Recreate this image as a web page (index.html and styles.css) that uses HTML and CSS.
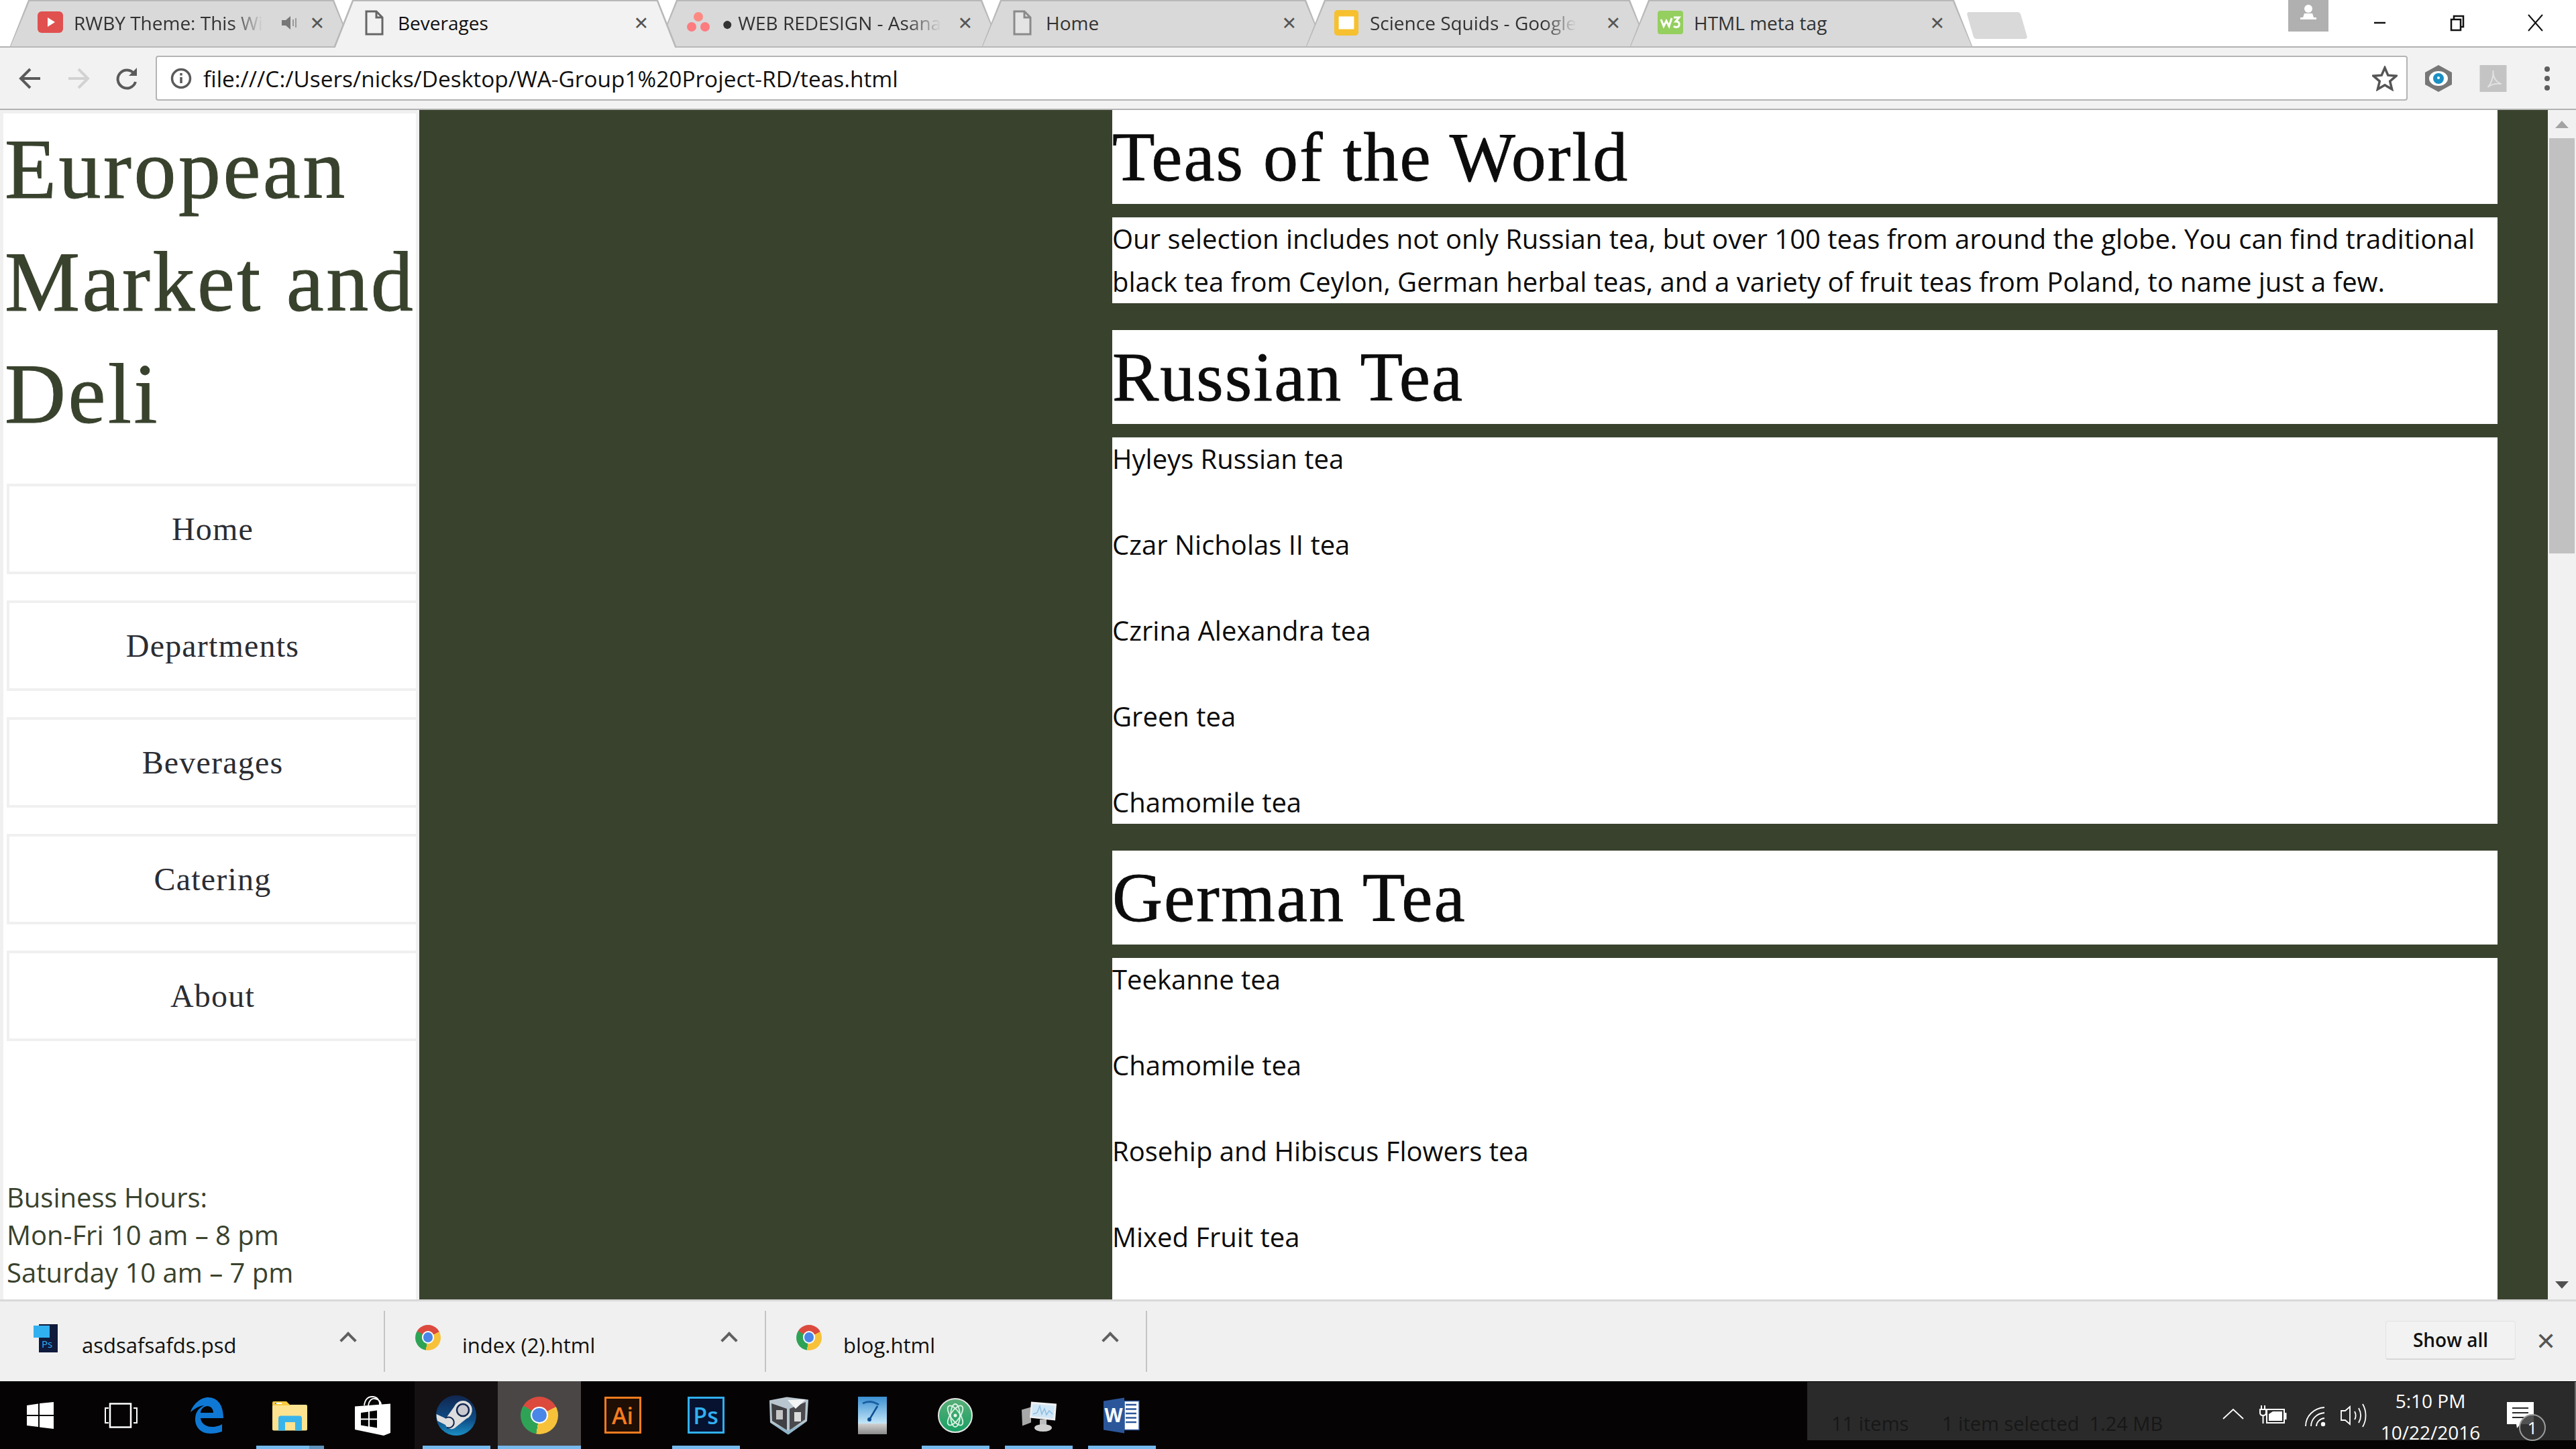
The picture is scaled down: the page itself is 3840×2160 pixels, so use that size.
FILE: index.html
```html
<!DOCTYPE html>
<html lang="en">
<head>
  <meta charset="UTF-8">
  <title>Beverages</title>
  <link rel="stylesheet" href="styles.css">
</head>
<body>
  <!-- Browser tabs -->
  <div class="tabstrip">
    <div class="tabs">
      <div class="tab">
        <svg class="fav" viewBox="0 0 38 38"><rect x="0" y="2" width="38" height="32" rx="6" fill="#e0504f"/><path d="M15 11l11 7-11 7z" fill="#fff"/></svg>
        <span class="tab-title tab-fade">RWBY Theme: This Wi</span>
        <svg class="tab-sound" viewBox="0 0 26 26"><path d="M1 9h6l7-6v20l-7-6H1z" fill="#777"/><path d="M18 8v10M22 6v14" stroke="#999" stroke-width="2"/></svg>
        <span class="tab-x">✕</span>
      </div>
      <div class="tab tab-active">
        <svg class="fav" viewBox="0 0 38 38"><path d="M7 2h15l9 9v25H7z" fill="#f2f2f2" stroke="#666" stroke-width="3"/><path d="M22 2v9h9" fill="none" stroke="#666" stroke-width="3"/></svg>
        <span class="tab-title">Beverages</span>
        <span class="tab-x">✕</span>
      </div>
      <div class="tab">
        <svg class="fav" viewBox="0 0 38 38"><circle cx="19" cy="10" r="7" fill="#fc8a83"/><circle cx="9" cy="25" r="7" fill="#fc7c80"/><circle cx="29" cy="25" r="7" fill="#fc7c80"/></svg>
        <span class="tab-title tab-fade">● WEB REDESIGN - Asana</span>
        <span class="tab-x">✕</span>
      </div>
      <div class="tab">
        <svg class="fav" viewBox="0 0 38 38"><path d="M7 2h15l9 9v25H7z" fill="#e4e4e4" stroke="#8a8a8a" stroke-width="3"/><path d="M22 2v9h9" fill="none" stroke="#8a8a8a" stroke-width="3"/></svg>
        <span class="tab-title">Home</span>
        <span class="tab-x">✕</span>
      </div>
      <div class="tab">
        <svg class="fav" viewBox="0 0 38 40"><rect y="0" width="38" height="40" rx="5" fill="#f6c02f"/><rect x="7" y="10" width="24" height="20" fill="#fff"/></svg>
        <span class="tab-title tab-fade">Science Squids - Google</span>
        <span class="tab-x">✕</span>
      </div>
      <div class="tab">
        <svg class="fav" viewBox="0 0 38 38"><rect y="1" width="38" height="35" rx="4" fill="#95cf5f"/><path d="M5 14l4 10 4-8 4 8 4-12M24 11h8l-5 6c5 0 6 3 5 6s-6 3-8 1" fill="none" stroke="#fff" stroke-width="3"/></svg>
        <span class="tab-title">HTML meta tag</span>
        <span class="tab-x">✕</span>
      </div>
    </div>
    <div class="new-tab"></div>
    <div class="window-btns">
      <div class="avatar">
        <svg viewBox="0 0 60 47"><circle cx="30" cy="13" r="6" fill="#fff"/><path d="M24 20h12l2 6h4v3H18v-3h4z" fill="#fff"/></svg>
      </div>
      <svg class="win-btn" viewBox="0 0 30 30"><path d="M7 15h17" stroke="#111" stroke-width="2.5"/></svg>
      <svg class="win-btn" viewBox="0 0 30 30"><path d="M6 10h14v16H6zM10 10V5h14v16h-4" fill="none" stroke="#111" stroke-width="2.5"/></svg>
      <svg class="win-btn" viewBox="0 0 30 30"><path d="M5 3l21 24M26 3L5 27" stroke="#111" stroke-width="2"/></svg>
    </div>
  </div>

  <!-- Back, forward, address bar -->
  <div class="toolbar">
    <svg class="tool-ico" viewBox="0 0 34 34"><path d="M32 17H4M17 3L3 17l14 14" fill="none" stroke="#5a5a5a" stroke-width="4"/></svg>
    <svg class="tool-ico tool-fwd" viewBox="0 0 34 34"><path d="M2 17h28M17 3l14 14-14 14" fill="none" stroke="#d2d2d2" stroke-width="4"/></svg>
    <svg class="tool-ico tool-reload" viewBox="0 0 34 34"><path d="M28 10a13.500 13.500 0 1 0 2 12" fill="none" stroke="#5a5a5a" stroke-width="4"/><path d="M20 13h12V1z" fill="#5a5a5a"/></svg>
    <div class="address">
      <svg class="info-ico" viewBox="0 0 32 32"><circle cx="16" cy="16" r="13.500" fill="none" stroke="#5a5a5a" stroke-width="3.500"/><path d="M16 14v9M16 8v3.500" stroke="#5a5a5a" stroke-width="3.500"/></svg>
      <span class="url">file:///C:/Users/nicks/Desktop/WA-Group1%20Project-RD/teas.html</span>
      <svg class="star-ico" viewBox="0 0 38 38"><path d="M19 3l4.800 11.200 12.200 1-9.300 8 2.900 11.800L19 28.800 8.400 35l2.900-11.800-9.300-8 12.200-1z" fill="none" stroke="#555" stroke-width="3.500"/></svg>
    </div>
    <svg class="ext-ico" viewBox="0 0 41 40"><path d="M20 0l20 11v18L20 40 0 29V11z" fill="#777"/><ellipse cx="20" cy="20" rx="14" ry="11" fill="#fff"/><circle cx="20" cy="20" r="8" fill="#1b8fc4"/><circle cx="20" cy="19" r="2" fill="#fff"/></svg>
    <svg class="ext-ico ext-pdf" viewBox="0 0 40 40"><rect width="40" height="40" fill="#c4c4c4"/><path d="M12 33c5-5 9-16 8-25-1 10 5 18 12 20-8-1-14 0-20 5z" fill="none" stroke="#e2e2e2" stroke-width="2"/></svg>
    <div class="menu-dots"><i></i><i></i><i></i></div>
  </div>

  <!-- The page itself -->
  <div class="page">
    <aside class="sidebar">
      <h1 class="site-title">European Market and Deli</h1>
      <nav class="site-nav">
        <a class="nav-item">Home</a>
        <a class="nav-item">Departments</a>
        <a class="nav-item">Beverages</a>
        <a class="nav-item">Catering</a>
        <a class="nav-item">About</a>
      </nav>
      <p class="hours">Business Hours:<br>Mon-Fri 10 am – 8 pm<br>Saturday 10 am – 7 pm</p>
    </aside>

    <main class="content">
      <h2 class="block-title">Teas of the World</h2>
      <div class="block-text">
        <p>Our selection includes not only Russian tea, but over 100 teas from around the globe. You can find traditional black tea from Ceylon, German herbal teas, and a variety of fruit teas from Poland, to name just a few.</p>
      </div>

      <h2 class="block-title">Russian Tea</h2>
      <div class="block-text tea-list">
        <p>Hyleys Russian tea</p>
        <p>Czar Nicholas II tea</p>
        <p>Czrina Alexandra tea</p>
        <p>Green tea</p>
        <p>Chamomile tea</p>
      </div>

      <h2 class="block-title">German Tea</h2>
      <div class="block-text tea-list tea-list-last">
        <p>Teekanne tea</p>
        <p>Chamomile tea</p>
        <p>Rosehip and Hibiscus Flowers tea</p>
        <p>Mixed Fruit tea</p>
      </div>
    </main>

    <div class="scrollbar">
      <span class="arrow-up"></span>
      <span class="thumb"></span>
      <span class="arrow-down"></span>
    </div>
  </div>

  <!-- Download shelf -->
  <div class="downloads">
    <div class="dl-item">
      <svg class="dl-ico" viewBox="0 0 38 44"><rect x="8" y="2" width="28" height="42" fill="#0f1a3c"/><rect x="0" y="4" width="24" height="18" fill="#31b0f0"/><text x="12" y="37" class="dl-ps">Ps</text></svg>
      <span class="dl-name">asdsafsafds.psd</span>
      <span class="dl-caret"></span>
    </div>
    <div class="dl-item">
      <span class="chrome-ico chrome-small"></span>
      <span class="dl-name">index (2).html</span>
      <span class="dl-caret"></span>
    </div>
    <div class="dl-item">
      <span class="chrome-ico chrome-small"></span>
      <span class="dl-name">blog.html</span>
      <span class="dl-caret"></span>
    </div>
    <button class="show-all">Show all</button>
    <span class="dl-close">✕</span>
  </div>

  <!-- Windows taskbar -->
  <div class="taskbar">
    <div class="task">
      <svg class="task-ico" viewBox="0 0 60 60"><path d="M10 15l17-2.500V29H10zM29 12l21-2v19H29zM10 31h17v16l-17-2zM29 31h21v19l-21-2.500z" fill="#fff"/></svg>
    </div>
    <div class="task">
      <svg class="task-ico" viewBox="0 0 60 60"><rect x="10" y="12.500" width="31" height="35" fill="none" stroke="#fff" stroke-width="2.500"/><path d="M8 19H3v22h5M45 19h5v22h-5" fill="none" stroke="#fff" stroke-width="2"/></svg>
    </div>
    <div class="task">
      <svg class="task-ico" viewBox="0 0 60 60"><path fill-rule="evenodd" fill="#0f78d4" d="M6 25C10 12 22 3 32 3c14 0 23 11 23 31H21c1 10 11 13 17 13 6 0 12-2 15-4v11c-6 2-11 3-17 3-16 0-23-11-23-21 0-10 4-16 13-21-8 1-14 5-20 10zM21 26h19c0-6-4-10-9-10-4 0-10 4-10 10z"/></svg>
    </div>
    <div class="task task-on task-stack">
      <svg class="task-ico" viewBox="0 0 60 60"><rect x="4" y="14" width="52" height="38.500" rx="2" fill="#fde38f"/><path d="M4 11a2 2 0 0 1 2-2h19l6 6H4z" fill="#f7c93e"/><rect x="8" y="11" width="2" height="2" fill="#2f9fe0"/><rect x="10" y="11" width="8" height="2" fill="#fff"/><path d="M13 52.500V34a3.500 3.500 0 0 1 3.500-3.500h28a3.500 3.500 0 0 1 3.500 3.500v18.500H38V40H23v12.500z" fill="#39b4ea"/></svg>
    </div>
    <div class="task">
      <svg class="task-ico" viewBox="0 0 60 60"><path d="M17 15c1-8 5-13 12-13s11 5 11 12M23 15c1-7 5-11 10-10 6 1 9 5 9 9" fill="none" stroke="#fff" stroke-width="1.800"/><path d="M3 16.500l53-4V56l-10 4L3 51z" fill="#fff"/><path d="M12 26l11-1.500v10H12zM25 24l11-1.500v12H25zM12 36.500h11v10l-11-2zM25 36.500h11v12l-11-2z" fill="#000"/></svg>
    </div>
    <div class="task task-on task-steam">
      <svg class="task-ico" viewBox="0 0 60 60"><defs><linearGradient id="steam" x1="0" y1="0" x2="0" y2="1"><stop offset="0" stop-color="#10264f"/><stop offset="0.600" stop-color="#0f4c86"/><stop offset="1" stop-color="#1a8fc4"/></linearGradient></defs><circle cx="30" cy="30" r="30" fill="url(#steam)"/><path d="M0.500 28l14 6.500L27 17c3-6 8-9 13-9a14 14 0 0 1 5 27l-15 12c-4 5-13 4-16-3L2 38a30 30 0 0 1-1.500-10z" fill="#dedede"/><circle cx="40" cy="22" r="9" fill="#c9c9cf" stroke="#10264f" stroke-width="2.500"/><path d="M14 34a8 8 0 1 1 2 14" fill="none" stroke="#10264f" stroke-width="2"/></svg>
    </div>
    <div class="task task-on task-active">
      <span class="chrome-ico"></span>
    </div>
    <div class="task">
      <div class="app-box app-ai"><span>Ai</span></div>
    </div>
    <div class="task task-on">
      <div class="app-box app-ps"><span>Ps</span></div>
    </div>
    <div class="task">
      <svg class="task-ico" viewBox="0 0 60 60"><path d="M1 7.500L27 2.500l32 4-2 32-28 20L2 40.500z" fill="#b9c6cf"/><path d="M4 12l23 8v32L5 38z" fill="#3f4044"/><path d="M31 20l24-10-1 26-23 16z" fill="#4a4a4e"/><path d="M28 7l27-1-15 14z" fill="#f2f4f5"/><rect x="11" y="22" width="10" height="14" fill="#c5c5c5"/><rect x="38" y="25" width="10" height="14" fill="#dcdcdc"/><path d="M29 58.500L2 40.500l27 12 28-14z" fill="#8fb4c8"/></svg>
    </div>
    <div class="task">
      <svg class="task-ico" viewBox="0 0 60 60"><defs><linearGradient id="gauge" x1="0" y1="0" x2="0" y2="1"><stop offset="0" stop-color="#3b8fd2"/><stop offset="1" stop-color="#c3e6f8"/></linearGradient><linearGradient id="gaugeBase" x1="0" y1="0" x2="0" y2="1"><stop offset="0" stop-color="#d2d2d2"/><stop offset="1" stop-color="#8a8a8a"/></linearGradient></defs><rect x="9" y="2" width="43" height="40" fill="url(#gauge)"/><rect x="9" y="42" width="43" height="16" fill="url(#gaugeBase)"/><path d="M16 12c8-4 16-3 24 2" fill="none" stroke="#1b5fa3" stroke-width="3"/><path d="M26 36l12-20" stroke="#0d4f94" stroke-width="2.500"/><circle cx="26" cy="36" r="3" fill="#0d4f94"/></svg>
    </div>
    <div class="task task-on">
      <svg class="task-ico" viewBox="0 0 60 60"><defs><linearGradient id="atom" x1="0" y1="0" x2="0" y2="1"><stop offset="0" stop-color="#5aae78"/><stop offset="1" stop-color="#17a063"/></linearGradient></defs><circle cx="30" cy="30" r="25" fill="url(#atom)" stroke="#e6e6e6" stroke-width="2"/><g fill="none" stroke="#dff3e6" stroke-width="1.800"><ellipse cx="30" cy="30" rx="17" ry="7" transform="rotate(55 30 30)"/><ellipse cx="30" cy="30" rx="17" ry="7" transform="rotate(-55 30 30)"/><ellipse cx="30" cy="30" rx="7" ry="17"/></g><circle cx="30" cy="30" r="2.500" fill="#e9f8ee"/></svg>
    </div>
    <div class="task task-on">
      <svg class="task-ico" viewBox="0 0 60 60"><path d="M5 21.500l14-4v23l-13 5z" fill="#a8a8a8"/><path d="M19 9.500l38 3-2 25-38-4z" fill="#eef0f2"/><path d="M21 13l33 2.500-2 19-32-3.500z" fill="#cfe6f6"/><path d="M22 28l6-2 4-10 3 12 4-8 3 9 4-6 5 5" fill="none" stroke="#8fbde0" stroke-width="1.500"/><path d="M32 36h10v8H32z" fill="#bdbdbd"/><ellipse cx="37" cy="48.500" rx="13" ry="5.500" fill="#cfcfcf"/></svg>
    </div>
    <div class="task task-on">
      <svg class="task-ico" viewBox="0 0 60 60"><rect x="34" y="8.500" width="22" height="43" fill="#fff" stroke="#2b579a" stroke-width="1.500"/><path d="M36 14h16M36 20.500h16M36 27h16M36 33.500h16M36 40h16" stroke="#2b579a" stroke-width="2.500"/><path d="M3 8.500l31-5v53l-31-5z" fill="#2b579a"/><text x="18" y="40" class="word-letter">W</text></svg>
    </div>

    <!-- dark panel over the right of the taskbar -->
    <div class="tray">
      <span class="status">11 items</span>
      <span class="status status-sel">1 item selected&nbsp;&nbsp;1.24 MB</span>
      <svg class="tray-ico tray-up" viewBox="0 0 32 17"><path d="M1 16L16 2l15 14" fill="none" stroke="#fff" stroke-width="1.800"/></svg>
      <svg class="tray-ico tray-batt" viewBox="0 0 42 27"><path d="M3 0v7M8 0v7" stroke="#fff" stroke-width="2"/><path d="M1 6h9v5c0 3-2 4-4.500 4S1 14 1 11zM5.500 15v12" fill="none" stroke="#fff" stroke-width="2"/><rect x="11" y="6" width="26" height="20" fill="none" stroke="#fff" stroke-width="2"/><path d="M14 13l6-4h14v14H14z" fill="#fff"/><rect x="37" y="11" width="3.500" height="10" fill="#fff"/></svg>
      <svg class="tray-ico tray-wifi" viewBox="0 0 31 30"><path d="M1 29C1 14 13 2 29 1M9 29C9 19 17 10 29 9M17 29c0-6 5-11 12-12" fill="none" stroke="#fff" stroke-width="1.800"/><circle cx="27" cy="26" r="3.200" fill="#fff"/></svg>
      <svg class="tray-ico tray-vol" viewBox="0 0 41 36"><path d="M1 11h6l7-6v26l-7-6H1z" fill="none" stroke="#fff" stroke-width="1.800"/><path d="M21 12c2 4 2 9 0 12M27 7c4 7 4 15 0 22M33 1c6 10 6 24 0 34" fill="none" stroke="#fff" stroke-width="1.800"/></svg>
      <div class="clock"><span>5:10 PM</span><span>10/22/2016</span></div>
      <div class="notify">
        <svg class="notify-ico" viewBox="0 0 40 39"><path d="M0 0h40v33H20l-5 6-1-6H0z" fill="#fff"/><path d="M8 9h24M8 16h24M8 23h20" stroke="#2a2a2a" stroke-width="2"/></svg>
        <span class="notify-badge">1</span>
      </div>
    </div>
  </div>
</body>
</html>
```

FILE: styles.css
```css
* {
  box-sizing: border-box;
}

body {
  margin: 0;
  width: 3840px;
  height: 2160px;
  overflow: hidden;
  display: flex;
  flex-direction: column;
  background: #fff;
  font-family: 'Open Sans', sans-serif;
}

/* Tab strip */
.tabstrip {
  height: 71px;
  display: flex;
  align-items: flex-start;
  border-bottom: 2px solid #b2b2b2;
  padding-left: 14px;
  background: #fff;
}

.tabs {
  display: flex;
  height: 71px;
}

.tab {
  position: relative;
  width: 512px;
  height: 71px;
  margin-right: -29px;
  padding: 0 42px 3px 42px;
  display: flex;
  align-items: center;
  gap: 16px;
  font-size: 28px;
  color: #333;
  background: #b8b8b8;
  clip-path: polygon(0 100%, 28px 0, calc(100% - 28px) 0, 100% 100%);
}

.tab::before {
  content: "";
  position: absolute;
  inset: 2px 2px 2px 2px;
  background: #d9d9d9;
  clip-path: polygon(0 100%, 28px 0, calc(100% - 28px) 0, 100% 100%);
  z-index: 0;
}

.tab > * {
  position: relative;
  z-index: 1;
}

.tab-active {
  z-index: 2;
  color: #111;
}

.tab-active::before {
  background: #f2f2f2;
  bottom: -2px;
}

.fav {
  width: 38px;
  height: 38px;
  flex: none;
}

.tab-title {
  margin-right: auto;
  white-space: nowrap;
}

.tab-fade {
  -webkit-mask-image: linear-gradient(to right, #000 84%, transparent);
  mask-image: linear-gradient(to right, #000 84%, transparent);
}

.tab-sound {
  width: 26px;
  height: 26px;
  flex: none;
}

.tab-x {
  font-family: 'DejaVu Sans', sans-serif;
  font-size: 27px;
  color: #555;
  flex: none;
}

.new-tab {
  width: 80px;
  height: 40px;
  margin: 18px 0 0 25px;
  background: #d9d9d9;
  border-radius: 4px;
  transform: skewX(16deg);
}

.window-btns {
  margin-left: auto;
  display: flex;
  align-items: flex-start;
}

.avatar {
  width: 60px;
  height: 47px;
  background: #b0b0b0;
  margin-right: 21px;
}

.avatar svg {
  display: block;
}

.win-btn {
  width: 30px;
  height: 30px;
  margin: 19px 46px 0 40px;
}

/* Toolbar */
.toolbar {
  height: 93px;
  display: flex;
  align-items: center;
  padding: 0 0 0 28px;
  background: #f2f2f2;
  border-bottom: 2px solid #b2b2b2;
}

.tool-ico {
  width: 34px;
  height: 34px;
  margin-right: 38px;
  flex: none;
}

.tool-reload {
  margin-right: 26px;
}

.address {
  width: 3357px;
  height: 67px;
  display: flex;
  align-items: center;
  padding: 0 20px;
  background: #fff;
  border: 2px solid #b4b4b4;
  border-radius: 4px;
}

.info-ico {
  width: 32px;
  height: 32px;
  flex: none;
  margin-right: 17px;
}

.url {
  font-size: 33.400px;
  color: #111;
  white-space: nowrap;
}

.star-ico {
  width: 38px;
  height: 38px;
  margin: 0 -7px 0 auto;
}

.ext-ico {
  width: 41px;
  height: 40px;
  margin-left: 26px;
  flex: none;
}

.ext-pdf {
  margin-left: 40px;
}

.menu-dots {
  margin-left: 56px;
  display: flex;
  flex-direction: column;
  gap: 6px;
}

.menu-dots i {
  width: 8px;
  height: 8px;
  border-radius: 50%;
  background: #5f5f5f;
}

/* Page */
.page {
  flex: 1;
  min-height: 0;
  display: flex;
  background: #39422d;
}

.sidebar {
  width: 625px;
  flex: none;
  display: flex;
  flex-direction: column;
  background: #fff;
  border: 5px solid #f0f0f0;
  border-bottom: none;
}

.site-title {
  margin: 0 -4px 0 2px;
  font-family: 'Liberation Serif', serif;
  font-weight: normal;
  font-size: 126px;
  line-height: 167.500px;
  letter-spacing: 3.500px;
  color: #39422d;
  -webkit-text-stroke: 1px #39422d;
}

.site-nav {
  margin: 49px 0 0 5px;
  display: flex;
  flex-direction: column;
  gap: 39px;
}

.nav-item {
  height: 135px;
  display: flex;
  align-items: center;
  justify-content: center;
  font-family: 'Liberation Serif', serif;
  font-size: 48px;
  letter-spacing: 1.200px;
  color: #2b2d33;
  border: 4px solid #f0f0f0;
  border-right: none;
}

.hours {
  margin: auto 0 12px 5px;
  font-size: 40px;
  line-height: 56px;
  color: #39422d;
}

.content {
  width: 2065px;
  margin-left: 1033px;
  flex: none;
  overflow: hidden;
}

.block-title {
  margin: 0 0 20px;
  height: 140px;
  background: #fff;
  font-family: 'Liberation Serif', serif;
  font-weight: normal;
  font-size: 104px;
  line-height: 140px;
  letter-spacing: 2px;
  color: #0c0c0c;
  -webkit-text-stroke: 0.800px #0c0c0c;
}

.block-text {
  background: #fff;
  margin-bottom: 40px;
  font-size: 40px;
  line-height: 64px;
  color: #0c0c0c;
}

.block-text p {
  margin: 0;
}

.tea-list p + p {
  margin-top: 64px;
}

/* the German list runs on below the fold */
.tea-list-last {
  padding-bottom: 200px;
}

.scrollbar {
  width: 42px;
  margin-left: auto;
  flex: none;
  position: relative;
  background: #f1f1f1;
}

.arrow-up,
.arrow-down {
  position: absolute;
  left: 11px;
  border-left: 10px solid transparent;
  border-right: 10px solid transparent;
}

.arrow-up {
  top: 16px;
  border-bottom: 11px solid #a3a3a3;
}

.arrow-down {
  bottom: 16px;
  border-top: 11px solid #505050;
}

.thumb {
  position: absolute;
  left: 2px;
  right: 2px;
  top: 42px;
  height: 619px;
  background: #c1c1c1;
}

/* Download shelf */
.downloads {
  height: 122px;
  display: flex;
  align-items: center;
  background: #f0f0f0;
  border-top: 3px solid #d9d9d9;
}

.dl-item {
  width: 568px;
  height: 91px;
  flex: none;
  display: flex;
  align-items: center;
  padding: 0 44px 0 50px;
  border-right: 2px solid #c4c4c4;
}

.dl-item:first-child {
  width: 574px;
}

.dl-ico {
  width: 38px;
  height: 44px;
  margin: -12px 2px 0 0;
  flex: none;
}

.dl-ps {
  font-family: 'Open Sans', sans-serif;
  font-size: 15px;
  fill: #31b0f0;
}

.dl-name {
  margin: 10px 0 0 32px;
  font-size: 31px;
  color: #111;
  white-space: nowrap;
}

.dl-caret {
  width: 18px;
  height: 18px;
  margin: -4px 0 0 auto;
  border-left: 4px solid #5f5f5f;
  border-top: 4px solid #5f5f5f;
  transform: rotate(45deg);
}

.show-all {
  margin: -4px 0 0 auto;
  width: 194px;
  height: 58px;
  padding: 0;
  font-family: 'Open Sans', sans-serif;
  font-size: 28px;
  font-weight: 600;
  color: #111;
  background: #f2f2f2;
  border: 1px solid #e2e2e2;
  border-bottom: 2px solid #d8d8d8;
  border-radius: 4px;
}

.dl-close {
  width: 90px;
  text-align: center;
  font-family: 'DejaVu Sans', sans-serif;
  font-size: 36px;
  color: #555;
}

/* Taskbar */
.taskbar {
  position: relative;
  height: 101px;
  display: flex;
  background: #050304;
}

.task {
  position: relative;
  width: 124px;
  height: 101px;
  flex: none;
  display: flex;
  align-items: center;
  justify-content: center;
}

.task:first-child {
  margin-left: -2px;
}

.task-on::after {
  content: "";
  position: absolute;
  left: 11.500px;
  right: 11.500px;
  bottom: 0;
  height: 5px;
  background: #76b9ed;
}

.task-stack::before {
  content: "";
  position: absolute;
  right: 11.500px;
  bottom: 0;
  width: 22px;
  height: 5px;
  background: #5f93bd;
  z-index: 1;
}

.task-steam {
  background: #151112;
}

.task-active {
  background: #4a4645;
}

.task-active::after {
  left: 0;
  right: 0;
}

.task-ico {
  width: 60px;
  height: 60px;
}

.chrome-ico {
  position: relative;
  width: 56px;
  height: 56px;
  border-radius: 50%;
  flex: none;
  background: conic-gradient(from -58deg, #dc4a3e 0 120deg, #f7c23a 120deg 248deg, #2ea356 248deg 360deg);
}

.chrome-ico::after {
  content: "";
  position: absolute;
  inset: 31%;
  border-radius: 50%;
  background: #4a86e8;
  box-shadow: 0 0 0 2px #fff;
}

.chrome-small {
  width: 38px;
  height: 38px;
  margin: -12px 0 0 -5px;
}

.app-box {
  width: 55px;
  height: 55px;
  display: flex;
  align-items: center;
  justify-content: center;
  font-size: 34px;
  font-weight: 600;
  background: #1f0e04;
  border: 3px solid currentColor;
}

.app-ai {
  color: #f57c1f;
}

.app-ps {
  color: #31b0f0;
  background: #061230;
}

.word-letter {
  font-family: 'Open Sans', sans-serif;
  font-size: 28px;
  font-weight: 700;
  fill: #fff;
  text-anchor: middle;
}

.tray {
  position: absolute;
  left: 2694px;
  right: 0;
  top: 1px;
  height: 87px;
  background: #2a2a2a;
  border-right: 2px solid #6c6c6c;
}

.status {
  position: absolute;
  left: 36px;
  top: 42px;
  font-size: 29px;
  color: #171717;
  white-space: nowrap;
}

.status-sel {
  left: 201px;
}

.tray-ico {
  position: absolute;
}

.tray-up {
  left: 619px;
  top: 39px;
  width: 32px;
  height: 17px;
}

.tray-batt {
  left: 674px;
  top: 35px;
  width: 42px;
  height: 27px;
}

.tray-wifi {
  left: 742px;
  top: 37px;
  width: 31px;
  height: 30px;
}

.tray-vol {
  left: 795px;
  top: 32px;
  width: 41px;
  height: 36px;
}

.clock {
  position: absolute;
  left: 844px;
  width: 170px;
  top: 5px;
  text-align: center;
  font-size: 28px;
  line-height: 47px;
  color: #fff;
  display: flex;
  flex-direction: column;
}

.notify {
  position: absolute;
  left: 1043px;
  top: 30px;
}

.notify-ico {
  display: block;
  width: 40px;
  height: 39px;
}

.notify-badge {
  position: absolute;
  left: 18px;
  top: 18px;
  width: 40px;
  height: 40px;
  border-radius: 50%;
  border: 2px solid #9c9c9c;
  background: rgba(50, 50, 50, 0.85);
  color: #fff;
  font-size: 26px;
  line-height: 36px;
  text-align: center;
}
```
